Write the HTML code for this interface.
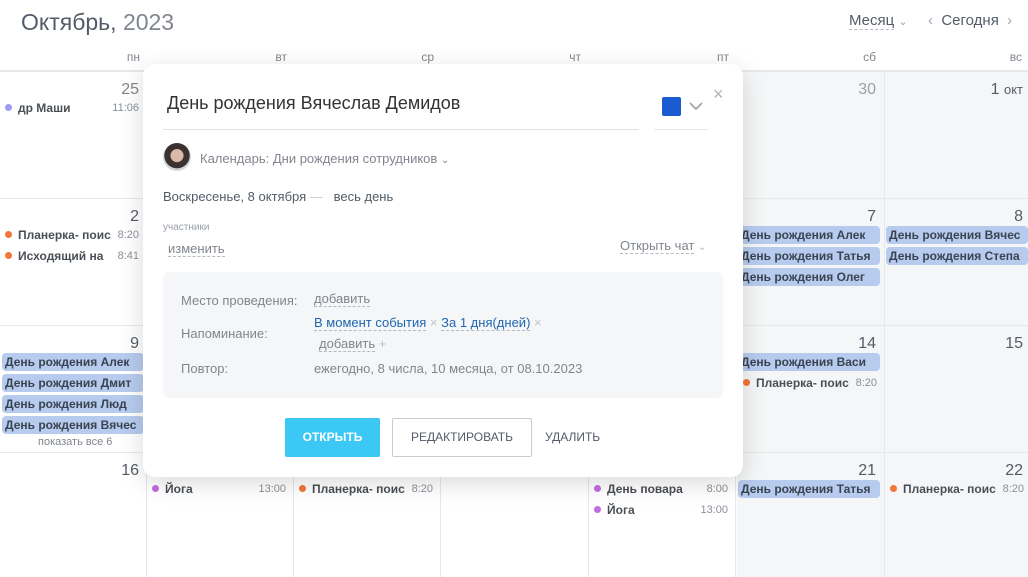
<!DOCTYPE html>
<html><head><meta charset="utf-8"><style>
*{box-sizing:border-box;margin:0;padding:0}
body{width:1028px;height:577px;overflow:hidden;background:#fff;font-family:"Liberation Sans",sans-serif;position:relative;color:#333}
.a{position:absolute}
.title{left:21px;top:9px;font-size:23px;color:#535c69;font-weight:300}
.title span{color:#80868e}
.dow{top:50px;font-size:12px;color:#80868e;text-align:right;width:140px}
.hl{left:0;top:70px;width:1028px;height:2px;background:#e6e8ea}
.col{top:72px;width:1px;height:505px;background:#e6e8ea}
.row{left:0;width:1028px;height:1px;background:#e6e8ea}
.we{top:72px;height:505px;background:#f5f6f7}
.num{font-size:16px;color:#535c69;text-align:right;width:130px}
.ev{font-size:12px;font-weight:bold;color:#4a4f55;white-space:nowrap;line-height:14px;height:14px}
.ev i{display:inline-block;width:7px;height:7px;border-radius:50%;margin-right:6px;vertical-align:1px}
.ev b{font-weight:normal;color:#8a9099;font-size:11px;position:absolute;right:0;top:0;line-height:14px}
.bd{height:18px;background:#b6cbee;border-radius:4px;font-size:12px;color:#3a4350;font-weight:bold;padding:0 3px;line-height:18px;white-space:nowrap;overflow:hidden;width:142px}
.pop{left:143px;top:64px;width:600px;height:413px;background:#fff;border-radius:12px;box-shadow:0 6px 24px rgba(0,0,0,.15)}
.dash{border-bottom:1px dashed #b5bac0}
</style></head><body>
<div class="a we" style="left:737px;width:147px"></div>
<div class="a we" style="left:885px;width:143px"></div>
<div class="a title">Октябрь, <span>2023</span></div>
<div class="a" style="left:849px;top:12px;font-size:15px;color:#535c69"><span class="dash">Месяц</span> <span style="color:#9aa0a6;font-size:11px">&#8964;</span></div>
<div class="a" style="left:928px;top:12px;font-size:15px;color:#535c69"><span style="color:#a0a6ac">&lsaquo;</span>&nbsp; Сегодня &nbsp;<span style="color:#a0a6ac">&rsaquo;</span></div>
<div class="a dow" style="left:0">пн</div><div class="a dow" style="left:147px">вт</div><div class="a dow" style="left:294px">ср</div><div class="a dow" style="left:441px">чт</div><div class="a dow" style="left:589px">пт</div><div class="a dow" style="left:736px">сб</div><div class="a dow" style="left:882px">вс</div>
<div class="a hl"></div>
<div class="a col" style="left:146px"></div><div class="a col" style="left:293px"></div><div class="a col" style="left:440px"></div><div class="a col" style="left:588px"></div><div class="a col" style="left:735px"></div><div class="a col" style="left:884px"></div>
<div class="a row" style="top:198px"></div><div class="a row" style="top:325px"></div><div class="a row" style="top:452px"></div>
<div class="a num" style="left:9px;top:81px;color:#80868e">25</div>
<div class="a ev" style="left:5px;top:101px;width:134px"><i style="background:#9a9cf5"></i>др Маши<b>11:06</b></div>
<div class="a num" style="left:746px;top:81px;color:#9aa0a6">30</div>
<div class="a num" style="left:893px;top:81px">1 <span style="font-size:13px">окт</span></div>
<div class="a num" style="left:9px;top:208px">2</div>
<div class="a ev" style="left:5px;top:228px;width:134px"><i style="background:#f5743a"></i>Планерка- поис<b>8:20</b></div>
<div class="a ev" style="left:5px;top:249px;width:134px"><i style="background:#f5743a"></i>Исходящий на<b>8:41</b></div>
<div class="a num" style="left:746px;top:208px">7</div>
<div class="a num" style="left:893px;top:208px">8</div>
<div class="a bd" style="left:738px;top:226px">День рождения Алек</div>
<div class="a bd" style="left:738px;top:247px">День рождения Татья</div>
<div class="a bd" style="left:738px;top:268px">День рождения Олег</div>
<div class="a bd" style="left:886px;top:226px">День рождения Вячес</div>
<div class="a bd" style="left:886px;top:247px">День рождения Степа</div>
<div class="a num" style="left:9px;top:335px">9</div>
<div class="a bd" style="left:2px;top:353px">День рождения Алек</div>
<div class="a bd" style="left:2px;top:374px">День рождения Дмит</div>
<div class="a bd" style="left:2px;top:395px">День рождения Люд</div>
<div class="a bd" style="left:2px;top:416px">День рождения Вячес</div>
<div class="a" style="left:38px;top:436px;font-size:11px;color:#80868e">показать все 6</div>
<div class="a num" style="left:746px;top:335px">14</div>
<div class="a bd" style="left:738px;top:353px">День рождения Васи</div>
<div class="a ev" style="left:743px;top:376px;width:134px"><i style="background:#f5743a"></i>Планерка- поис<b>8:20</b></div>
<div class="a num" style="left:893px;top:335px">15</div>
<div class="a num" style="left:9px;top:462px">16</div>
<div class="a ev" style="left:152px;top:482px;width:134px"><i style="background:#c36be0"></i>Йога<b>13:00</b></div>
<div class="a ev" style="left:299px;top:482px;width:134px"><i style="background:#f5743a"></i>Планерка- поис<b>8:20</b></div>
<div class="a ev" style="left:594px;top:482px;width:134px"><i style="background:#c36be0"></i>День повара<b>8:00</b></div>
<div class="a ev" style="left:594px;top:503px;width:134px"><i style="background:#c36be0"></i>Йога<b>13:00</b></div>
<div class="a num" style="left:746px;top:462px">21</div>
<div class="a bd" style="left:738px;top:480px">День рождения Татья</div>
<div class="a num" style="left:893px;top:462px">22</div>
<div class="a ev" style="left:890px;top:482px;width:134px"><i style="background:#f5743a"></i>Планерка- поис<b>8:20</b></div>
<div class="a pop">
 <div class="a" style="left:24px;top:29px;font-size:18px;color:#333">День рождения Вячеслав Демидов</div>
 <div class="a" style="left:20px;top:65px;width:476px;height:1px;background:#dfe2e6"></div>
 <div class="a" style="left:519px;top:33px;width:19px;height:19px;background:#1a5bd1;border-radius:2px"></div>
 <svg class="a" style="left:546px;top:37px" width="14" height="10"><path d="M1 2l6 6 6-6" stroke="#9aa0a6" stroke-width="1.6" fill="none"/></svg>
 <div class="a" style="left:511px;top:65px;width:54px;height:1px;background:#e6e8ea"></div>
 <div class="a" style="left:570px;top:20px;font-size:18px;color:#b0b5ba">×</div>
 <div class="a" style="left:20px;top:79px;width:28px;height:28px;border-radius:50%;background:radial-gradient(circle at 50% 45%,#d9b9a8 0 30%,#3b3230 33% 60%,#cfd6dc 62%)"></div>
 <div class="a" style="left:57px;top:87px;font-size:13px;color:#80868e">Календарь: Дни рождения сотрудников <span style="font-size:10px">&#8964;</span></div>
 <div class="a" style="left:20px;top:125px;font-size:13px;color:#535c69">Воскресенье, 8 октября<span style="color:#ccc"> — </span>&nbsp; весь день</div>
 <div class="a" style="left:20px;top:158px;font-size:10px;color:#9aa0a6">участники</div>
 <div class="a dash" style="left:25px;top:177px;font-size:13px;color:#80868e">изменить</div>
 <div class="a" style="left:477px;top:174px;font-size:13px;color:#80868e"><span class="dash">Открыть чат</span> <span style="font-size:10px;color:#b0b5ba">&#8964;</span></div>
 <div class="a" style="left:20px;top:208px;width:560px;height:126px;background:#f5f6f8;border-radius:6px"></div>
 <div class="a" style="left:38px;top:229px;font-size:13px;color:#80868e">Место проведения:</div>
 <div class="a dash" style="left:171px;top:227px;font-size:13px;color:#80868e">добавить</div>
 <div class="a" style="left:38px;top:262px;font-size:13px;color:#80868e">Напоминание:</div>
 <div class="a" style="left:171px;top:251px;font-size:13px;color:#2067b0"><span class="dash">В момент события</span> <span style="color:#c0c4c8">×</span> <span class="dash">За 1 дня(дней)</span> <span style="color:#c0c4c8">×</span></div>
 <div class="a" style="left:176px;top:272px;font-size:13px;color:#80868e"><span class="dash">добавить</span> <span style="color:#c0c4c8">+</span></div>
 <div class="a" style="left:38px;top:297px;font-size:13px;color:#80868e">Повтор:</div>
 <div class="a" style="left:171px;top:297px;font-size:13px;color:#80868e">ежегодно, 8 числа, 10 месяца, от 08.10.2023</div>
 <div class="a" style="left:142px;top:354px;width:95px;height:39px;background:#3bc8f5;border-radius:2px;color:#fff;font-size:12px;font-weight:bold;text-align:center;line-height:39px">ОТКРЫТЬ</div>
 <div class="a" style="left:249px;top:354px;width:140px;height:39px;border:1px solid #c6cdd3;border-radius:2px;color:#535c69;font-size:12px;text-align:center;line-height:37px">РЕДАКТИРОВАТЬ</div>
 <div class="a" style="left:402px;top:366px;color:#535c69;font-size:12px">УДАЛИТЬ</div>
</div>
</body></html>
